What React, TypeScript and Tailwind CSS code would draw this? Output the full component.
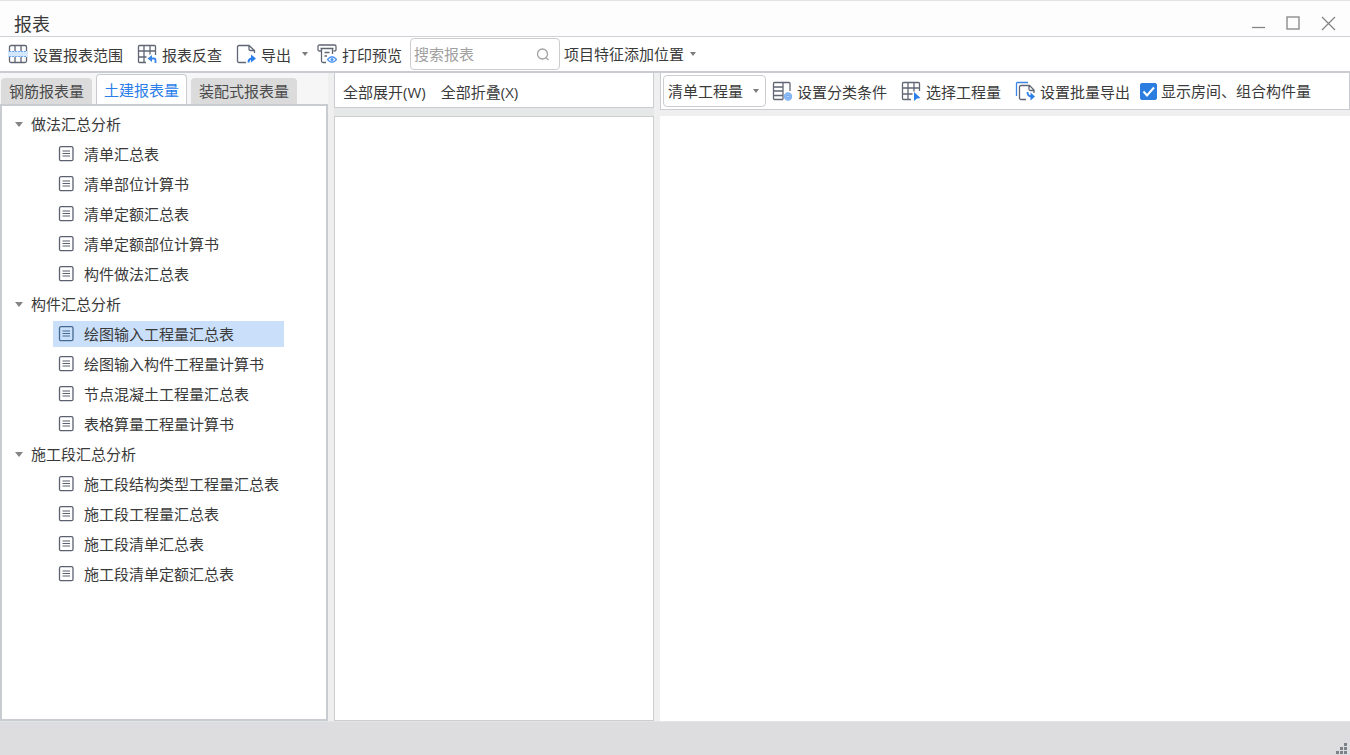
import { useState } from 'react'
import type { ReactNode } from 'react'

const tabs = ['钢筋报表量', '土建报表量', '装配式报表量']

const groups = [
  {
    title: '做法汇总分析',
    reports: ['清单汇总表', '清单部位计算书', '清单定额汇总表', '清单定额部位计算书', '构件做法汇总表'],
  },
  {
    title: '构件汇总分析',
    reports: ['绘图输入工程量汇总表', '绘图输入构件工程量计算书', '节点混凝土工程量汇总表', '表格算量工程量计算书'],
  },
  {
    title: '施工段汇总分析',
    reports: ['施工段结构类型工程量汇总表', '施工段工程量汇总表', '施工段清单汇总表', '施工段清单定额汇总表'],
  },
]

const Icon = ({ children }: { children: ReactNode }) => (
  <svg
    className="size-5 shrink-0"
    viewBox="0 0 20 20"
    fill="none"
    stroke="#606674"
    strokeWidth="1.3"
    aria-hidden="true"
  >
    {children}
  </svg>
)

const RangeIcon = () => (
  <Icon>
    <rect x="1.5" y="1.5" width="17" height="17" rx="1.5" />
    <path d="M7 1.5V7M13 1.5V7M7 13v5.5M13 13v5.5" />
    <path d="M0 7h20v6H0z" fill="#d5e7fc" stroke="none" />
    <path d="M1 7.5h18M1 12.5h18" stroke="#6aa6f2" strokeWidth="1" strokeDasharray="2 1" />
  </Icon>
)

const TraceIcon = () => (
  <Icon>
    <path d="M18.5 11V2.5Q18.5 1.5 17.5 1.5H2.5Q1.5 1.5 1.5 2.5V17.5Q1.5 18.5 2.5 18.5H9M7 1.5v17M13 1.5v9M1.5 7h17M1.5 13h8" />
    <path d="M18.5 19v-3q0-1.5-1.5-1.5H13" stroke="#3d86e8" strokeWidth="1.8" />
    <path d="M10.5 14.5l4.5-3.5v7z" fill="#3d86e8" stroke="none" />
  </Icon>
)

const ExportIcon = () => (
  <Icon>
    <path d="M10 18.5H3Q1.5 18.5 1.5 17V3Q1.5 1.5 3 1.5H13L18.5 6.5V9M13 1.5V5q0 1.5 1.5 1.5h4" />
    <path d="M12.5 18.5q0-4 4-4" stroke="#2b7de9" strokeWidth="2" />
    <path d="M15 10.5l5 4-5 4z" fill="#2b7de9" stroke="none" />
  </Icon>
)

const PreviewIcon = () => (
  <Icon>
    <path d="M4.5 7H2.5Q1 7 1 5.5V2.5Q1 1 2.5 1H17.5Q19 1 19 2.5V5.5Q19 7 17.5 7H16.5" />
    <path d="M3.500 4.500h13M4.500 4.500v12.500Q4.500 18.500 6 18.500H9M15.500 4.500V10M7.500 8.500h5M7.500 12h2.500" />
    <path d="M10.5 15.5q4.500-5.500 9 0q-4.500 5.500-9 0z" fill="#fff" stroke="#4b93ef" />
    <circle cx="15" cy="15.5" r="1.5" fill="#4b93ef" stroke="none" />
  </Icon>
)

const ClassifyIcon = () => (
  <Icon>
    <path d="M11 18.5H2.5Q1.5 18.5 1.5 17.5V2.5Q1.5 1.5 2.5 1.5H17Q18 1.5 18 2.5V10M11 1.5v17M1.5 6h9.5M1.5 10h9.5M1.5 14.5h9.5" />
    <circle cx="16" cy="15.5" r="3.5" fill="#8fbdf6" stroke="#7fb3f4" />
    <circle cx="16" cy="15.5" r="1.3" fill="#cfe2fc" stroke="#5598ef" strokeWidth=".8" />
  </Icon>
)

const PickIcon = () => (
  <Icon>
    <path d="M18.5 10V2.5Q18.5 1.5 17.5 1.5H2.5Q1.5 1.5 1.5 2.5V17.5Q1.5 18.5 2.5 18.5H10M7 1.5v17M13 1.5v9M1.5 7h17M1.5 13h10" />
    <path d="M13 11l6.500 6-3.500.5-3 2.500z" fill="#2b7de9" stroke="none" />
  </Icon>
)

const BatchIcon = () => (
  <Icon>
    <path d="M1.5 15V2.5Q1.5 1.5 2.5 1.5H13" stroke="#3d86e8" />
    <path d="M11 18.5H6Q4.5 18.5 4.5 17V6Q4.5 4.5 6 4.5H14.5L19 9V12M14 4.5V8q0 1.5 1.5 1.5H19" />
    <path d="M12.5 11q0 4.500 4 4.500" stroke="#2b7de9" strokeWidth="1.8" />
    <path d="M15.5 11.5l4.500 4-4.500 4z" fill="#2b7de9" stroke="none" />
  </Icon>
)

const ReportIcon = ({ active }: { active: boolean }) => (
  <svg
    className="size-4 shrink-0"
    viewBox="0 0 16 16"
    fill="none"
    stroke={active ? '#46698f' : '#5c6170'}
    strokeWidth="1.3"
    aria-hidden="true"
  >
    <rect x="1.5" y=".7" width="13.5" height="14" rx="1.5" />
    <path d="M4.5 5h7.500M4.500 7.500h7.500M4.500 10h7.500" strokeWidth="1.1" />
  </svg>
)

const Caret = ({ className = '' }: { className?: string }) => (
  <svg className={`h-1 w-2 shrink-0 ${className}`} viewBox="0 0 8 4" fill="#7c7c7c" aria-hidden="true">
    <path d="M1 0h6L4 4z" />
  </svg>
)

const ToolButton = ({ icon, label }: { icon: ReactNode; label: string }) => (
  <button type="button" className="flex shrink-0 items-center gap-[5px] whitespace-nowrap">
    {icon}
    <span className="pt-0.5">{label}</span>
  </button>
)

export default function App() {
  const [activeTab, setActiveTab] = useState('土建报表量')
  const [selected, setSelected] = useState('绘图输入工程量汇总表')
  const [showRooms, setShowRooms] = useState(true)
  const [search, setSearch] = useState('')

  return (
    <div className="flex h-screen flex-col overflow-hidden bg-[#efefef] [font-family:'Open_Sans','Noto_Sans_CJK_SC',sans-serif] text-[15px] leading-5 text-[#3a3a3a]">
      <header className="flex h-9 shrink-0 items-end justify-between border-t border-[#e3e3e3] bg-[#fdfdfd] pr-3 pl-3.5">
        <h1 className="pb-0.5 text-lg leading-5">报表</h1>
        <div className="flex gap-[15px] pb-1 text-[#858585]">
          <button type="button" aria-label="最小化">
            <svg className="size-5" viewBox="0 0 20 20" fill="none" stroke="currentColor">
              <path d="M4 15.5h13" strokeWidth="1.3" />
            </svg>
          </button>
          <button type="button" aria-label="最大化">
            <svg className="size-5" viewBox="0 0 20 20" fill="none" stroke="currentColor">
              <rect x="4" y="5" width="12" height="12" strokeWidth="1.3" />
            </svg>
          </button>
          <button type="button" aria-label="关闭">
            <svg className="size-5" viewBox="0 0 20 20" fill="none" stroke="currentColor">
              <path d="M4 5l13 13M17 5L4 18" strokeWidth="1.3" />
            </svg>
          </button>
        </div>
      </header>

      <div className="flex h-[37px] shrink-0 items-center gap-3.5 border-t border-b-2 border-t-[#cfd2d6] border-b-[#c9ccd1] bg-white pl-2">
        <ToolButton icon={<RangeIcon />} label="设置报表范围" />
        <ToolButton icon={<TraceIcon />} label="报表反查" />
        <div className="flex shrink-0 items-center gap-2.5">
          <ToolButton icon={<ExportIcon />} label="导出" />
          <button type="button" aria-label="导出选项">
            <Caret />
          </button>
        </div>
        <div className="-ml-1.5 flex items-center gap-2">
          <ToolButton icon={<PreviewIcon />} label="打印预览" />
          <label className="flex h-8 w-[150px] items-center rounded-sm border border-[#cdcdcd] bg-white pr-2 pl-[3px]">
            <input
              type="text"
              aria-label="搜索报表"
              placeholder="搜索报表"
              className="min-w-0 flex-1 outline-none placeholder:text-[#a0a0a0]"
              value={search}
              onChange={(e) => setSearch(e.target.value)}
            />
            <svg className="size-4 shrink-0" viewBox="0 0 16 16" fill="none" stroke="#a3a3a3" strokeWidth="1.3">
              <circle cx="7.5" cy="8" r="5" />
              <path d="M11 11.5l2.500 2.500" />
            </svg>
          </label>
        </div>
        <button type="button" className="-ml-2.5 flex items-center gap-[5px] whitespace-nowrap">
          项目特征添加位置
          <Caret />
        </button>
      </div>

      <div className="flex min-h-0 flex-1 gap-1.5">
        <aside className="flex w-[328px] shrink-0 flex-col">
          <div role="tablist" className="flex h-[31px] items-end gap-1 bg-[#f6f6f6] pl-px">
            {tabs.map((tab) => (
              <button
                key={tab}
                type="button"
                role="tab"
                aria-selected={tab === activeTab}
                onClick={() => setActiveTab(tab)}
                className={
                  tab === activeTab
                    ? 'h-[30px] rounded-t-sm border border-b-0 border-[#c9ccd1] bg-white px-[7px] text-[#2b7de9]'
                    : 'h-[26px] rounded-t-sm bg-[#dbdbdb] px-2 text-[#4a4a4a]'
                }
              >
                {tab}
              </button>
            ))}
          </div>
          <nav className="flex-1 overflow-auto border-2 border-[#c9ccd1] bg-white pt-[3px]">
            {groups.map((group) => (
              <section key={group.title}>
                <h2 className="flex h-[30px] items-center gap-2 pl-[13px]">
                  <svg className="h-[5px] w-2 shrink-0" viewBox="0 0 8 5" fill="#858585" aria-hidden="true">
                    <path d="M0 0h8L4 5z" />
                  </svg>
                  {group.title}
                </h2>
                <ul>
                  {group.reports.map((report) => (
                    <li key={report} className="flex h-[30px] items-center pr-[42px] pl-[51px]">
                      <button
                        type="button"
                        onClick={() => setSelected(report)}
                        className={`flex h-[26px] flex-1 items-center gap-2.5 pl-[5px] whitespace-nowrap ${
                          report === selected ? 'bg-[#c9dffa]' : ''
                        }`}
                      >
                        <ReportIcon active={report === selected} />
                        {report}
                      </button>
                    </li>
                  ))}
                </ul>
              </section>
            ))}
          </nav>
        </aside>

        <section className="flex w-80 shrink-0 flex-col">
          <div className="flex h-[35px] shrink-0 items-center gap-[15px] border border-t-0 border-[#c9ccd1] bg-white px-2 pt-1">
            <button type="button">全部展开(W)</button>
            <button type="button">全部折叠(X)</button>
          </div>
          <div className="h-2 shrink-0 bg-[#e6e7e7]" />
          <div className="flex-1 border border-[#cdcdcd] bg-white" />
        </section>

        <main className="flex min-w-0 flex-1 flex-col gap-1.5">
          <div className="flex h-[37px] shrink-0 items-center gap-3.5 border border-t-0 border-[#c9ccd1] bg-white pl-0.5">
            <div className="grid shrink-0 items-center">
              <select
                aria-label="工程量类型"
                className="col-start-1 row-start-1 h-8 w-[103px] appearance-none rounded-sm border border-[#cdcdcd] bg-white pl-1 outline-none"
              >
                <option>清单工程量</option>
                <option>定额工程量</option>
              </select>
              <Caret className="pointer-events-none col-start-1 row-start-1 mr-1.5 justify-self-end" />
            </div>
            <div className="-ml-2 flex items-center gap-3.5">
              <ToolButton icon={<ClassifyIcon />} label="设置分类条件" />
              <ToolButton icon={<PickIcon />} label="选择工程量" />
              <ToolButton icon={<BatchIcon />} label="设置批量导出" />
            </div>
            <label className="-ml-1 flex items-center gap-1 whitespace-nowrap">
              <span className="grid shrink-0">
                <input
                  type="checkbox"
                  className="peer col-start-1 row-start-1 size-[17px] appearance-none rounded-xs border border-[#2b7de0] checked:bg-[#2b7de0]"
                  checked={showRooms}
                  onChange={(e) => setShowRooms(e.target.checked)}
                />
                <svg
                  className="pointer-events-none invisible col-start-1 row-start-1 size-[17px] peer-checked:visible"
                  viewBox="0 0 17 17"
                  fill="none"
                  stroke="#fff"
                  strokeWidth="2"
                >
                  <path d="M3.5 8.5l3.500 4 7-8" />
                </svg>
              </span>
              显示房间、组合构件量
            </label>
          </div>
          <div className="flex-1 bg-white" />
        </main>
      </div>

      <footer className="flex h-[34px] shrink-0 items-end justify-end border-t border-[#e3e4e5] bg-[#dddde0]">
        <svg className="mr-0.5 size-3" viewBox="0 0 12 12" fill="#7c828a" aria-hidden="true">
          <path d="M8 0h3v3H8zM4 4h3v3H4zM8 4h3v3H8zM0 8h3v3H0zM4 8h3v3H4zM8 8h3v3H8z" />
        </svg>
      </footer>
    </div>
  )
}
